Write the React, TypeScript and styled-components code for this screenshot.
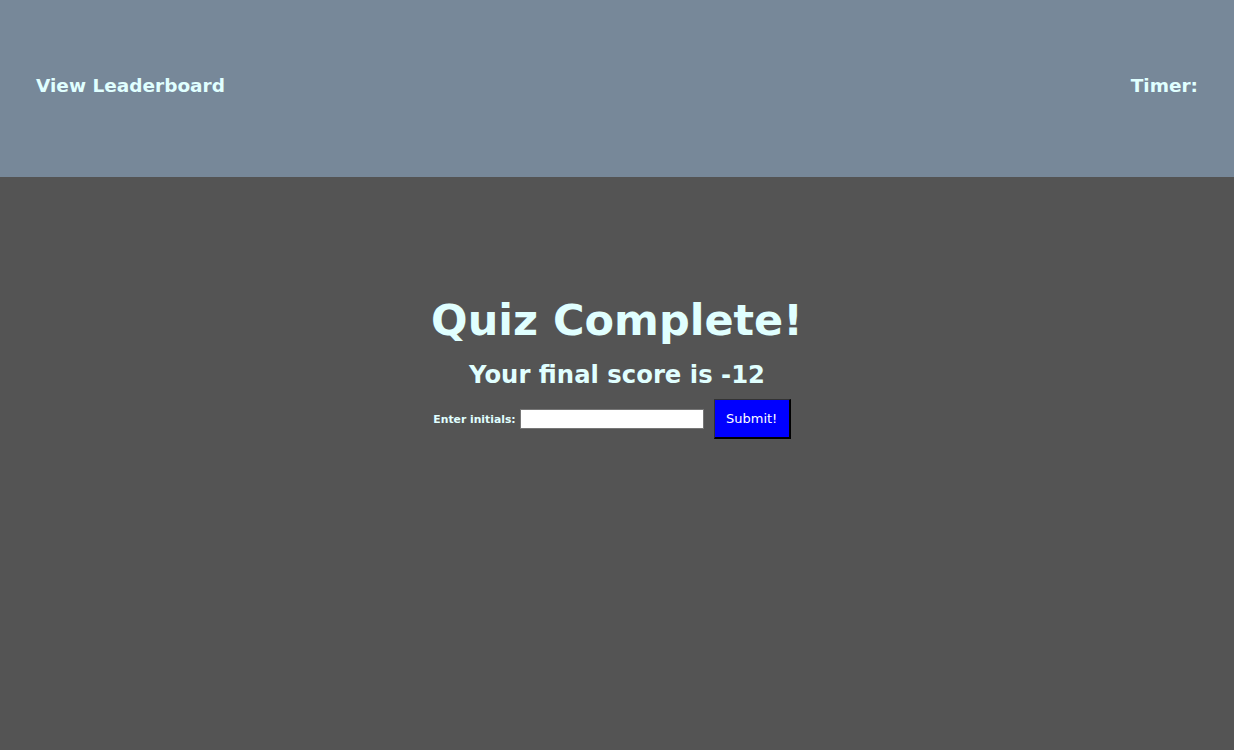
import React from 'react'
import styled, { createGlobalStyle } from 'styled-components'

const GlobalStyle = createGlobalStyle`
  html, body {
    margin: 0;
    padding: 0;
    height: 100%;
    background-color: #545454;
    font-family: "DejaVu Sans", Verdana, sans-serif;
  }
`

const Page = styled.div`
  min-height: 750px;
  background-color: #545454;
  color: #e0ffff;
`

const Header = styled.header`
  height: 177px;
  background-color: #778899;
  display: flex;
  align-items: center;
  justify-content: space-between;
  padding: 0 36px 6px;
  box-sizing: border-box;
`

const HeaderItem = styled.div`
  font-size: 18.5px;
  font-weight: bold;
  color: #e0ffff;
`

const Main = styled.main`
  display: flex;
  flex-direction: column;
  align-items: center;
  padding-top: 118px;
`

const Title = styled.h1`
  font-size: 43px;
  font-weight: bold;
  margin: 0;
  line-height: 50px;
`

const Score = styled.h2`
  font-size: 24.3px;
  font-weight: bold;
  margin: 15px 0 0;
  line-height: 30px;
`

const Form = styled.form`
  display: flex;
  align-items: center;
  margin-top: 9px;
  padding-right: 10px;
`

const Label = styled.label`
  font-size: 10.8px;
  font-weight: bold;
  margin-right: 4px;
`

const Input = styled.input`
  width: 184px;
  height: 20px;
  box-sizing: border-box;
  border: 1px solid #767676;
  background: #fff;
  padding: 0 2px;
  margin: 0;
`

const SubmitButton = styled.button`
  margin-left: 10px;
  width: 77px;
  height: 40px;
  box-sizing: border-box;
  background-color: #0000ff;
  color: #ffffff;
  font-family: "DejaVu Sans", Verdana, sans-serif;
  font-size: 13px;
  border-top: 1px solid #333;
  border-left: 1px solid #333;
  border-right: 2px solid #000;
  border-bottom: 2px solid #000;
  padding: 0;
`

export default function App() {
  return (
    <Page>
      <GlobalStyle />
      <Header>
        <HeaderItem>View Leaderboard</HeaderItem>
        <HeaderItem>Timer:</HeaderItem>
      </Header>
      <Main>
        <Title>Quiz Complete!</Title>
        <Score>Your final score is -12</Score>
        <Form onSubmit={(e) => e.preventDefault()}>
          <Label htmlFor="initials">Enter initials:</Label>
          <Input id="initials" type="text" />
          <SubmitButton type="submit">Submit!</SubmitButton>
        </Form>
      </Main>
    </Page>
  )
}
